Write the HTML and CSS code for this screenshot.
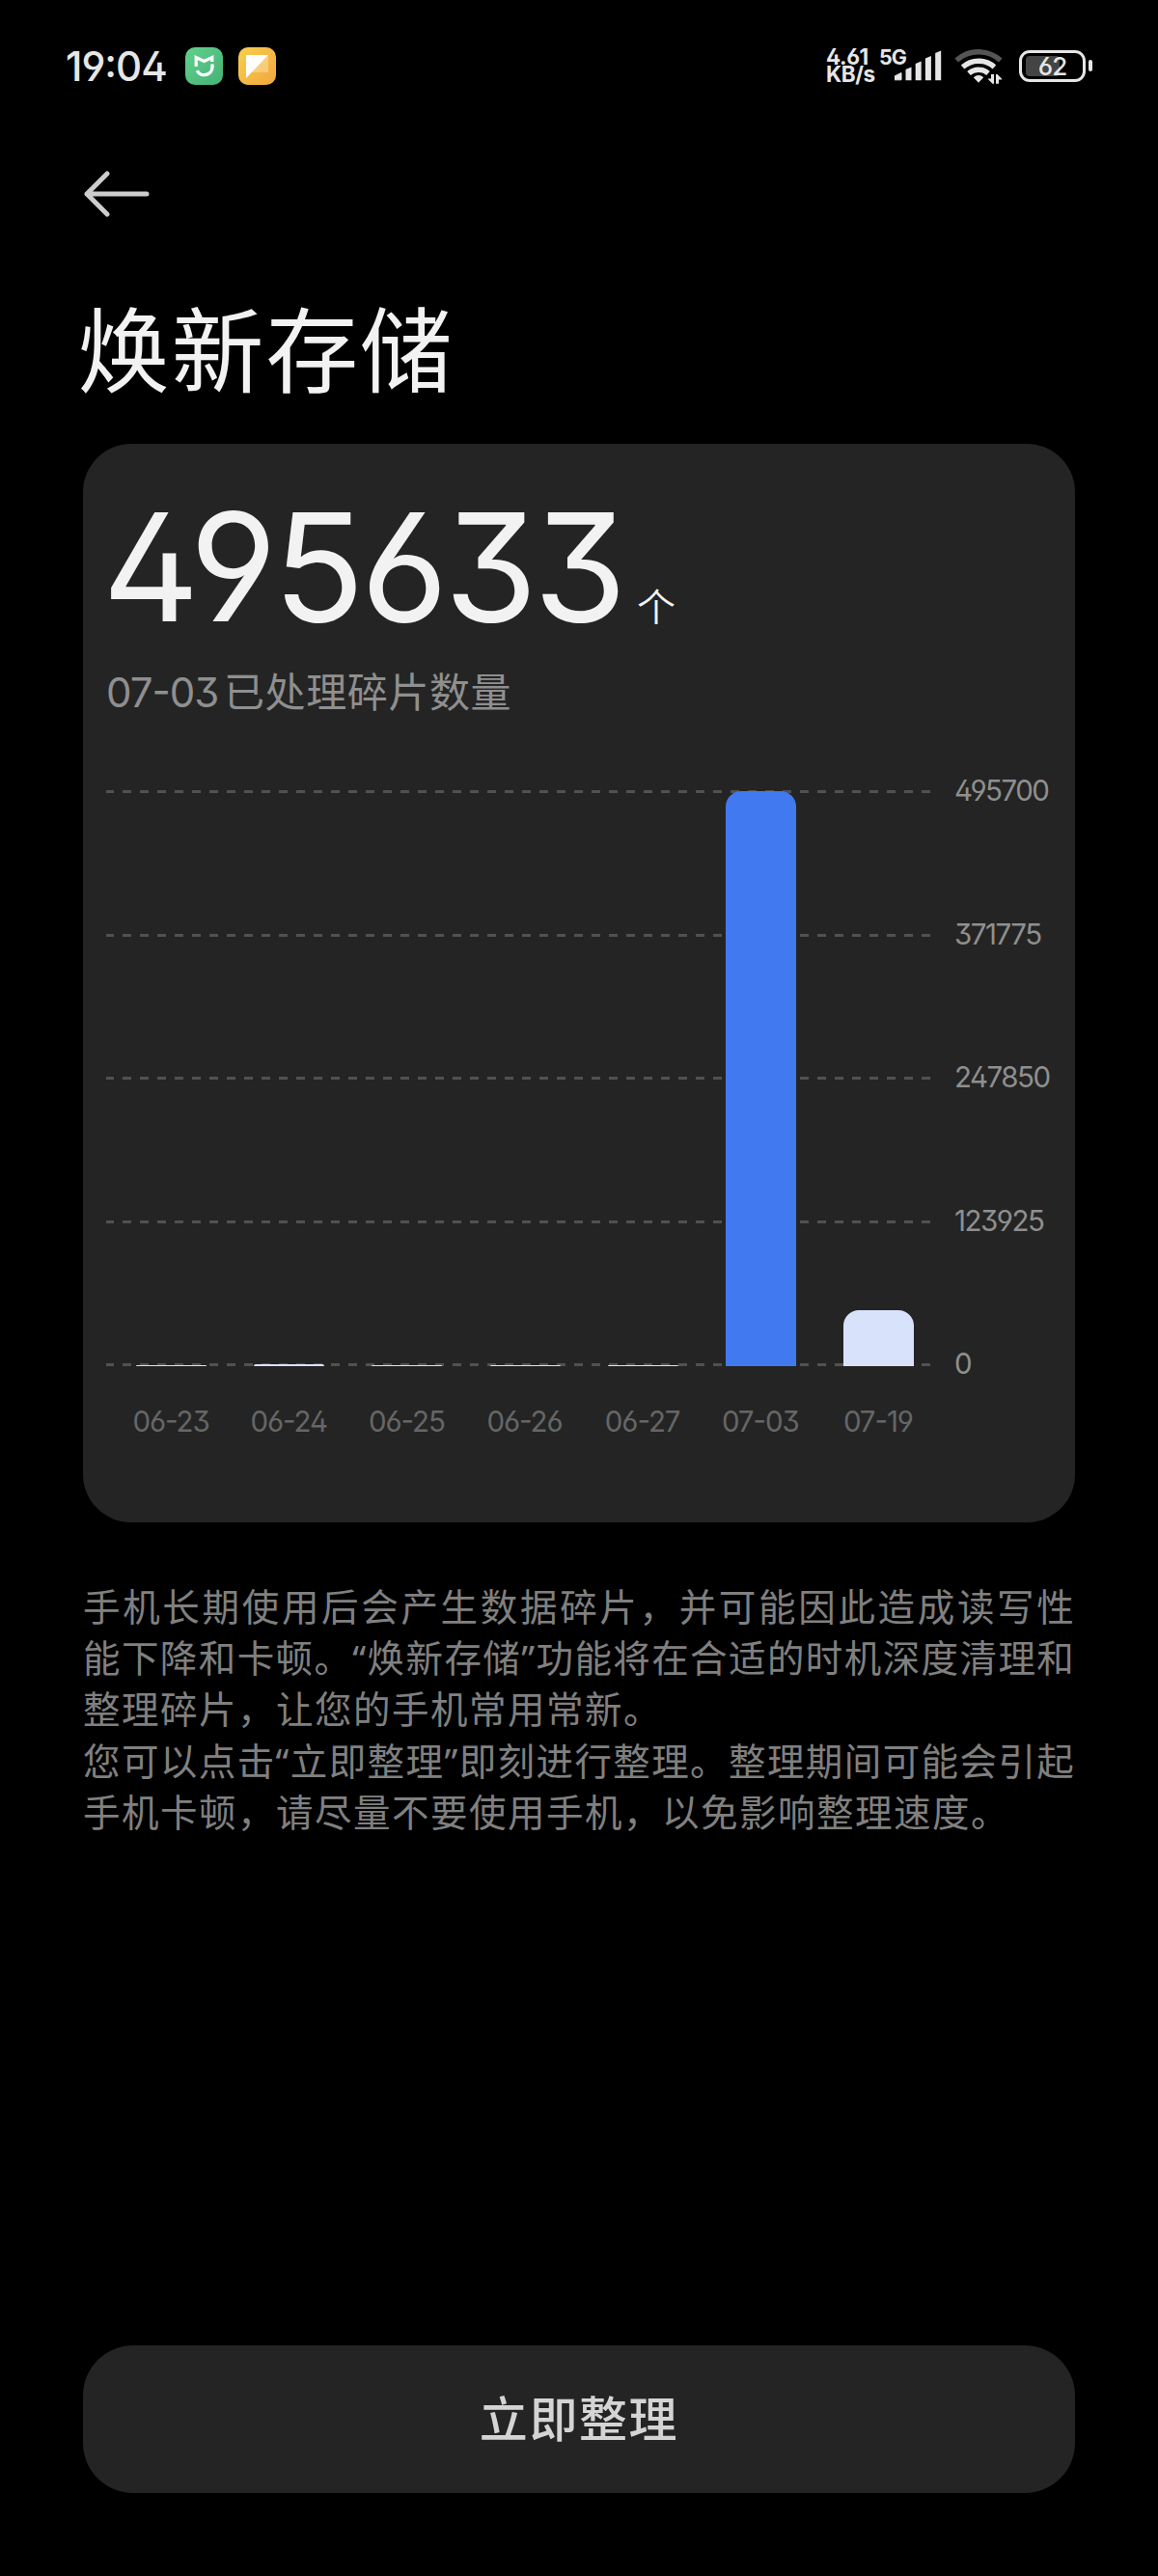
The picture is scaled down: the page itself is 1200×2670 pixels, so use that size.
FILE: index.html
```html
<!DOCTYPE html>
<html lang="zh-CN">
<head>
    <meta charset="UTF-8">
    <meta name="viewport" content="width=device-width, initial-scale=1.0">
    <title>焕新存储</title>
    <link rel="stylesheet" href="styles.css">
</head>
<body>

<!-- Status bar -->
<div class="status-bar">
    <div class="status-left">
        <span class="clock">19:04</span>
        <svg class="app-icon" viewBox="0 0 39 39">
            <defs>
                <linearGradient id="green" x1="0" y1="0" x2="1" y2="1">
                    <stop offset="0" stop-color="#62d08c"/>
                    <stop offset="1" stop-color="#45b277"/>
                </linearGradient>
            </defs>
            <rect width="39" height="39" rx="10" fill="url(#green)"/>
            <path d="M11.2 20V10.5L19.5 14.5L27.8 10.5V15" fill="none" stroke="#fff" stroke-width="3.2"/>
            <path d="M28 17.5V20.5A8.4 8.4 0 0 1 12.2 24.2" fill="none" stroke="#fff" stroke-width="3.4"/>
        </svg>
        <svg class="app-icon" viewBox="0 0 39 39">
            <defs>
                <linearGradient id="yellow" x1="0" y1="0" x2="1" y2="1">
                    <stop offset="0" stop-color="#f8d04c"/>
                    <stop offset="1" stop-color="#f2a63f"/>
                </linearGradient>
            </defs>
            <rect width="39" height="39" rx="10" fill="url(#yellow)"/>
            <rect x="8" y="8" width="23" height="18" rx="1" fill="#fff" opacity=".3"/>
            <path d="M8 9Q8 8 9 8H31L8 32Z" fill="#fff"/>
        </svg>
    </div>
    <div class="status-right">
        <div class="speed"><span>4.61</span><span>KB/s</span></div>
        <span class="network">5G</span>
        <svg class="signal" viewBox="0 0 49 32">
            <g fill="#e6e6e6">
                <path d="M0 30.8V27L7 23.5V30.8Z" stroke="#e6e6e6" stroke-linejoin="round"/>
                <path d="M11.5 31.2V20L17.5 17.5V31.2Z"/>
                <path d="M21.7 31.2V14L27.7 11.5V31.2Z"/>
                <path d="M31.9 31.2V8.5L37.9 6V31.2Z"/>
                <path d="M42.2 31.2V3L48.2 .5V31.2Z"/>
            </g>
        </svg>
        <svg class="wifi" viewBox="0 0 50 38">
            <g fill="none" stroke-width="5.4">
                <path d="M2.2 13.6A34 34 0 0 1 47.8 13.6" stroke="#555"/>
                <path d="M8.6 20.5A24.5 24.5 0 0 1 41.4 20.5" stroke="#e6e6e6"/>
                <path d="M15 27A15 15 0 0 1 35 27" stroke="#e6e6e6"/>
            </g>
            <path d="M19.8 31.2Q25 26.8 30.2 31.2L25 36.8Z" fill="#e6e6e6"/>
            <!-- up / down traffic arrows -->
            <path d="M38 28H41V37.8H39.5L34.8 33V32.4H38ZM43 37.8V28H44.5L49.2 32.8V33.4H46V37.8Z" fill="#e6e6e6"/>
        </svg>
        <div class="battery"><span class="battery-fill"></span><span class="battery-text">62</span></div>
        <div class="battery-cap"></div>
    </div>
</div>

<!-- Page header -->
<header>
    <svg class="back" viewBox="0 0 68 48">
        <path d="M24 3L3 24L24 45M3 24H65" fill="none" stroke="#cdcdcd" stroke-width="5" stroke-linecap="round" stroke-linejoin="round"/>
    </svg>
    <h1>焕新存储</h1>
</header>

<main>
    <section class="card">
        <div class="total"><span class="total-number">495633</span><span class="total-unit">个</span></div>
        <p class="subtitle"><span class="subtitle-date">07-03</span>已处理碎片数量</p>

        <div class="chart">
            <div class="plot">
                <div class="grid">
                    <i></i><i></i><i></i><i></i><i></i>
                </div>
                <div class="bars">
                    <div class="bar" style="height: 1px"></div>
                    <div class="bar" style="height: 2px"></div>
                    <div class="bar" style="height: 1px"></div>
                    <div class="bar" style="height: 1px"></div>
                    <div class="bar" style="height: 1px"></div>
                    <div class="bar active" style="height: 596px"></div>
                    <div class="bar" style="height: 58px"></div>
                </div>
            </div>
            <div class="y-axis">
                <span>495700</span>
                <span>371775</span>
                <span>247850</span>
                <span>123925</span>
                <span>0</span>
            </div>
        </div>
        <div class="x-axis">
            <span>06-23</span>
            <span>06-24</span>
            <span>06-25</span>
            <span>06-26</span>
            <span>06-27</span>
            <span>07-03</span>
            <span>07-19</span>
        </div>
    </section>

    <div class="description">
        <p class="full">手机长期使用后会产生数据碎片，并可能因此造成读写性</p>
        <p class="full">能下降和卡顿。“焕新存储”功能将在合适的时机深度清理和</p>
        <p>整理碎片，让您的手机常用常新。</p>
        <p class="full">您可以点击“立即整理”即刻进行整理。整理期间可能会引起</p>
        <p>手机卡顿，请尽量不要使用手机，以免影响整理速度。</p>
    </div>
</main>

<footer>
    <button class="action">立即整理</button>
</footer>

</body>
</html>
```
FILE: styles.css
```css
* {
    box-sizing: border-box;
    margin: 0;
    padding: 0;
}

body {
    width: 1200px;
    height: 2670px;
    display: flex;
    flex-direction: column;
    background: #000;
    color: #f2f2f2;
    font-family: Inter, "Noto Sans CJK SC", sans-serif;
    font-feature-settings: "ss01", "cv03", "cv04", "cv09", "case"; /* open 6 / 9, flat-top 3, raised hyphen */
    overflow: hidden;
}

/* Status bar */
.status-bar {
    height: 136px;
    padding: 0 68px 0 68px;
    display: flex;
    justify-content: space-between;
    align-items: center;
    color: #e6e6e6;
}

.status-left {
    display: flex;
    align-items: center;
}

.clock {
    width: 124px;
    font-size: 42px;
    font-weight: 500;
    letter-spacing: -1px;
}

.app-icon {
    width: 39px;
    height: 39px;
    margin-right: 16px;
}

.status-right {
    display: flex;
    align-items: center;
}

.speed {
    width: 55px;
    display: flex;
    flex-direction: column;
    font-size: 22.5px;
    font-weight: 700;
    line-height: 18.5px;
    letter-spacing: -0.4px;
}

.network {
    width: 16px;
    margin-bottom: 19px;
    font-size: 21.5px;
    font-weight: 700;
    line-height: 18px;
    letter-spacing: -1px;
}

.signal {
    width: 49px;
    height: 32px;
}

.wifi {
    width: 50px;
    height: 38px;
    margin-left: 13px;
}

.battery {
    position: relative;
    width: 69px;
    height: 33px;
    margin-left: 17px;
    border: 3px solid #e6e6e6;
    border-radius: 11px;
    text-align: center;
}

.battery-fill {
    position: absolute;
    left: 4px;
    top: 3px;
    width: 35px;
    height: 21px;
    border-radius: 4px;
    background: #444;
}

.battery-text {
    position: relative;
    display: block;
    font-size: 26px;
    font-weight: 500;
    line-height: 27px;
    letter-spacing: -1px;
}

.battery-cap {
    width: 4px;
    height: 12px;
    margin-left: 3px;
    border-radius: 2px;
    background: #e6e6e6;
}

/* Header */
header {
    height: 324px;
    padding: 41px 0 0 80px;
}

.back {
    display: block;
    width: 68px;
    height: 48px;
    margin-left: 7px;
}

h1 {
    margin-top: 69px;
    font-size: 96px;
    font-weight: 400;
    line-height: 140px;
    letter-spacing: 1.6px;
}

/* Card */
main {
    padding: 0 86px;
}

.card {
    height: 1118px;
    padding: 50px 24px 0;
    border-radius: 50px;
    background: #242424;
}

.total {
    display: flex;
    align-items: baseline;
    height: 160px;
    line-height: 156px;
}

.total-number {
    width: 554px;
    margin-left: -4px;
    font-size: 156px;
    font-weight: 400;
    letter-spacing: -4.2px;
}

.total-unit {
    font-size: 40px;
    font-weight: 350;
}

.subtitle {
    margin-top: 17px;
    color: #8f8f8f;
    font-size: 42px;
    line-height: 62px;
    letter-spacing: 0.6px;
}

.subtitle-date {
    display: inline-block;
    width: 122px;
    letter-spacing: -1px;
}

/* Chart */
.chart {
    display: flex;
    height: 597px;
    margin-top: 70px;
}

.plot {
    display: grid;
    width: 854px;
}

.grid,
.bars {
    grid-area: 1 / 1;
}

.grid {
    display: flex;
    flex-direction: column;
    justify-content: space-between;
}

.grid i {
    height: 3px;
    background: linear-gradient(90deg, #515151 50%, transparent 50%) -1px 0 / 18px 3px repeat-x;
}

.bars {
    display: flex;
    align-items: flex-end;
    gap: 49.2px;
    padding-left: 31px;
}

.bar {
    flex: none;
    width: 73px;
    border-radius: 16px 16px 0 0;
    background: #d8e3fb;
}

.bar.active {
    background: #4179f0;
}

.y-axis {
    display: flex;
    flex-direction: column;
    justify-content: space-between;
    margin-left: 25px;
    color: #8f8f8f;
}

.y-axis span {
    height: 3px;
    font-size: 29.5px;
    line-height: 1px;
    letter-spacing: -1.5px;
}

.x-axis {
    display: flex;
    width: 855px;
    margin: 37px 0 0 6px;
    color: #666;
}

.x-axis span {
    flex: 1;
    font-size: 29.5px;
    line-height: 40px;
    letter-spacing: -1.1px;
    text-align: center;
}

/* Description */
.description {
    margin-top: 61px;
    color: #808080;
    font-family: "Noto Sans", "Noto Sans CJK SC", sans-serif;
    font-size: 38.5px;
    line-height: 53.2px;
    letter-spacing: 1.5px;
}

.description p {
    height: 53.2px;
    white-space: nowrap;
}

/* lines that fill the whole width */
.description .full {
    letter-spacing: 1.2px;
    text-align: justify;
    text-align-last: justify;
    white-space: normal;
}

/* Bottom button */
footer {
    margin-top: auto;
    padding: 0 86px 86px;
}

.action {
    display: block;
    width: 100%;
    height: 153px;
    padding-bottom: 8px;
    border: none;
    border-radius: 52px;
    background: #242424;
    color: #d4d4d4;
    font-family: "Noto Sans CJK SC", sans-serif;
    font-size: 50px;
    font-weight: 500;
    letter-spacing: 1.6px;
}
```
